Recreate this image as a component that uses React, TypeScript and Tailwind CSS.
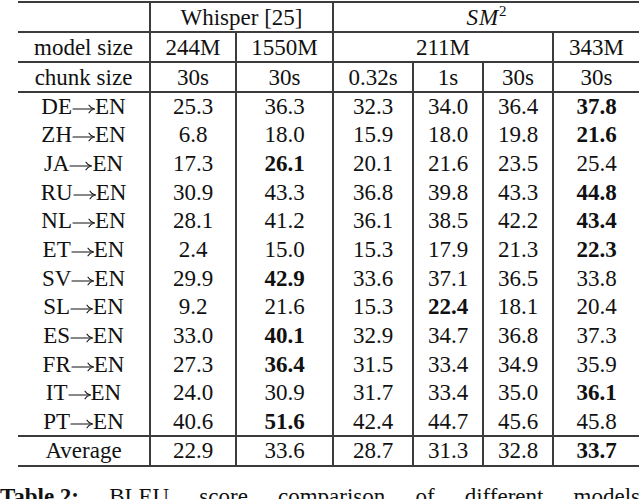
import React from "react";

const rows: { lang: string; vals: string[]; best: number }[] = [
  { lang: "DE", vals: ["25.3", "36.3", "32.3", "34.0", "36.4", "37.8"], best: 5 },
  { lang: "ZH", vals: ["6.8", "18.0", "15.9", "18.0", "19.8", "21.6"], best: 5 },
  { lang: "JA", vals: ["17.3", "26.1", "20.1", "21.6", "23.5", "25.4"], best: 1 },
  { lang: "RU", vals: ["30.9", "43.3", "36.8", "39.8", "43.3", "44.8"], best: 5 },
  { lang: "NL", vals: ["28.1", "41.2", "36.1", "38.5", "42.2", "43.4"], best: 5 },
  { lang: "ET", vals: ["2.4", "15.0", "15.3", "17.9", "21.3", "22.3"], best: 5 },
  { lang: "SV", vals: ["29.9", "42.9", "33.6", "37.1", "36.5", "33.8"], best: 1 },
  { lang: "SL", vals: ["9.2", "21.6", "15.3", "22.4", "18.1", "20.4"], best: 3 },
  { lang: "ES", vals: ["33.0", "40.1", "32.9", "34.7", "36.8", "37.3"], best: 1 },
  { lang: "FR", vals: ["27.3", "36.4", "31.5", "33.4", "34.9", "35.9"], best: 1 },
  { lang: "IT", vals: ["24.0", "30.9", "31.7", "33.4", "35.0", "36.1"], best: 5 },
  { lang: "PT", vals: ["40.6", "51.6", "42.4", "44.7", "45.6", "45.8"], best: 1 },
];

const average = ["22.9", "33.6", "28.7", "31.3", "32.8", "33.7"];

const colWidths = ["w-[132px]", "w-[86px]", "w-[97px]", "w-[80px]", "w-[70px]", "w-[70px]", "w-[86px]"];

// LaTeX-style \rightarrow
function Arrow() {
  return (
    <svg
      width="23"
      height="12"
      viewBox="0 0 23 12"
      className="inline-block align-[-1px]"
      fill="none"
      stroke="#111"
      strokeWidth="1.1"
      strokeLinecap="round"
    >
      <path d="M1 6H22" />
      <path d="M17 2.2Q18.6 5 22.3 6Q18.6 7 17 9.8" />
    </svg>
  );
}

export default function App() {
  return (
    <div className="min-h-screen bg-white font-['Liberation_Serif',serif] text-[23px] leading-none text-[#111]">
      <div className="pl-[18px] pt-px">
        <table className="w-[621px] table-fixed border-collapse text-center">
          <colgroup>
            {colWidths.map((w, i) => (
              <col key={i} className={w} />
            ))}
          </colgroup>
          <tbody>
            {/* header rows */}
            <tr className="h-[30px] border-t-2 border-b-2 border-[#3c3c3c]">
              <td />
              <td colSpan={2} className="border-l-2 border-[#3c3c3c]">
                Whisper [25]
              </td>
              <td colSpan={4} className="border-l-2 border-[#3c3c3c]">
                <span className="italic tracking-[1px]">SM</span>
                <sup className="relative -top-[9px] text-[15px]">2</sup>
              </td>
            </tr>
            <tr className="h-[30px] border-b-2 border-[#3c3c3c]">
              <td>model size</td>
              <td className="border-l-2 border-[#3c3c3c]">244M</td>
              <td className="border-l-2 border-[#3c3c3c]">1550M</td>
              <td colSpan={3} className="border-l-2 border-[#3c3c3c]">
                211M
              </td>
              <td className="border-l-2 border-[#3c3c3c]">343M</td>
            </tr>
            <tr className="h-[30px] border-b-2 border-[#3c3c3c]">
              <td>chunk size</td>
              <td className="border-l-2 border-[#3c3c3c]">30s</td>
              <td className="border-l-2 border-[#3c3c3c]">30s</td>
              <td className="border-l-2 border-[#3c3c3c]">0.32s</td>
              <td className="border-l-2 border-[#3c3c3c]">1s</td>
              <td className="border-l-2 border-[#3c3c3c]">30s</td>
              <td className="border-l-2 border-[#3c3c3c]">30s</td>
            </tr>

            {/* per-language rows */}
            {rows.map((r, ri) => (
              <tr
                key={r.lang}
                className={`h-[28.67px] ${ri === rows.length - 1 ? "border-b-2 border-[#3c3c3c]" : ""}`}
              >
                <td className="whitespace-nowrap">
                  {r.lang}
                  <Arrow />
                  EN
                </td>
                {r.vals.map((v, i) => (
                  <td
                    key={i}
                    className={`border-l-2 border-[#3c3c3c] ${i === r.best ? "font-bold" : ""}`}
                  >
                    {v}
                  </td>
                ))}
              </tr>
            ))}

            <tr className="h-[30px] border-b-2 border-[#3c3c3c]">
              <td>Average</td>
              {average.map((v, i) => (
                <td key={i} className={`border-l-2 border-[#3c3c3c] ${i === 5 ? "font-bold" : ""}`}>
                  {v}
                </td>
              ))}
            </tr>
          </tbody>
        </table>
      </div>

      {/* caption, mostly below the fold */}
      <div className="mt-[18px] flex justify-between leading-[23px]">
        <span className="font-bold">Table 2:</span>
        <span>BLEU</span>
        <span>score</span>
        <span>comparison</span>
        <span>of</span>
        <span>different</span>
        <span>models</span>
      </div>
      <p className="text-justify leading-[26px]">
        on the X→EN translation task, reported for each source language and
        averaged over all twelve of them.
      </p>
    </div>
  );
}
